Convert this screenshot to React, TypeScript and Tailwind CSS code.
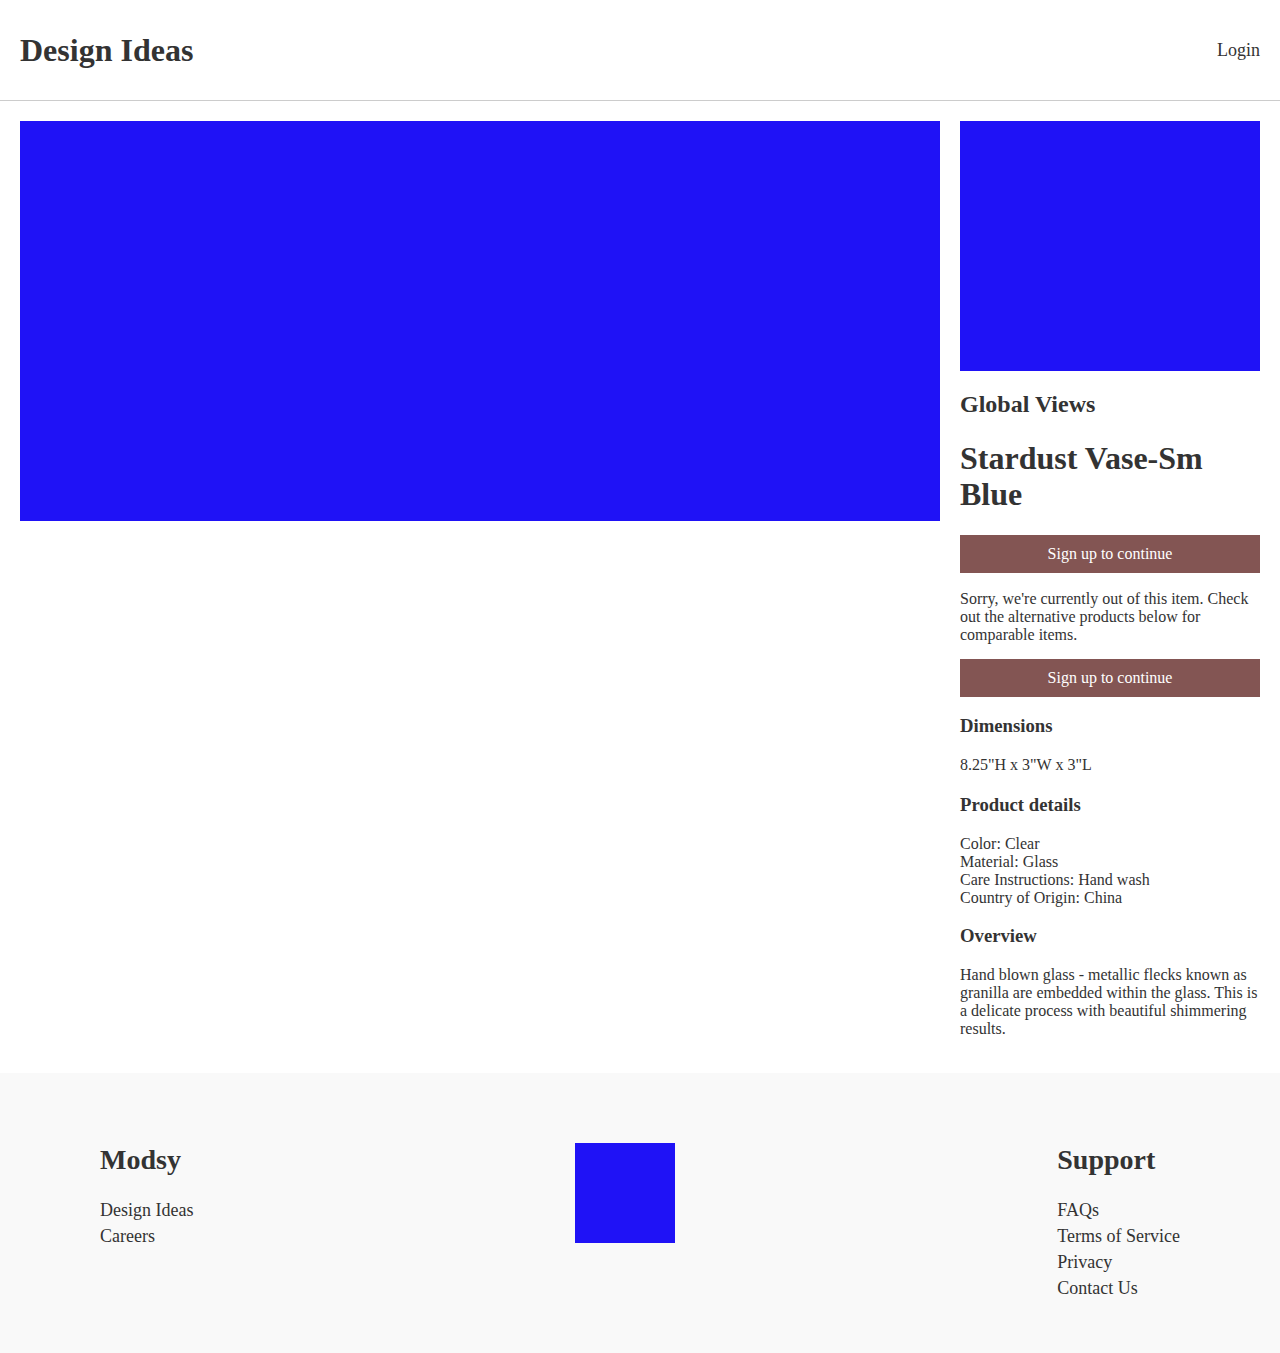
export default function App() {
  const serif = { fontFamily: '"Liberation Serif", "Times New Roman", serif' };
  return (
    <div style={serif} className="min-h-screen flex flex-col text-[#333] bg-white">
      <header className="h-[101px] border-b border-[#ccc] flex items-center justify-between px-5">
        <h1 className="text-[32px] font-bold leading-[1.15]">Design Ideas</h1>
        <a className="text-[18px]" href="#">Login</a>
      </header>

      <main className="flex gap-5 p-5 pb-1">
        <div className="flex-1 h-[400px] bg-[#1f12f6]" />
        <div className="w-[300px] shrink-0">
          <div className="h-[250px] bg-[#1f12f6]" />
          <h2 className="text-[24px] font-bold leading-[1.15] mt-[20px]">Global Views</h2>
          <h1 className="text-[32px] font-bold leading-[1.15] mt-[21px]">Stardust Vase-Sm Blue</h1>
          <button className="mt-[22px] w-full h-[38px] bg-[#835553] text-white text-[16px]">
            Sign up to continue
          </button>
          <p className="text-[16px] leading-[18px] mt-[17px] mb-[15px]">
            Sorry, we're currently out of this item. Check out the alternative products below for comparable items.
          </p>
          <button className="w-full h-[38px] bg-[#835553] text-white text-[16px]">
            Sign up to continue
          </button>
          <h3 className="text-[18.72px] font-bold leading-[1.15] mt-[18px] mb-[19px]">Dimensions</h3>
          <p className="text-[16px] leading-[18px]">8.25"H x 3"W x 3"L</p>
          <h3 className="text-[18.72px] font-bold leading-[1.15] mt-[20px] mb-[20px]">Product details</h3>
          <p className="text-[16px] leading-[18px]">
            Color: Clear
            <br />
            Material: Glass
            <br />
            Care Instructions: Hand wash
            <br />
            Country of Origin: China
          </p>
          <h3 className="text-[18.72px] font-bold leading-[1.15] mt-[18px] mb-[19px]">Overview</h3>
          <p className="text-[16px] leading-[18px] mb-4">
            Hand blown glass - metallic flecks known as granilla are embedded within the glass. This is a delicate process with beautiful shimmering results.
          </p>
        </div>
      </main>

      <footer className="mt-auto bg-[#f9f9f9] flex justify-between items-start px-[100px] pt-[70px] pb-[52px]">
        <div>
          <h2 className="text-[28px] font-bold leading-[1.15] mt-px">Modsy</h2>
          <ul className="mt-[21px] text-[18px] leading-[26px]">
            <li>Design Ideas</li>
            <li>Careers</li>
          </ul>
        </div>
        <div className="w-[100px] h-[100px] bg-[#1f12f6]" />
        <div>
          <h2 className="text-[28px] font-bold leading-[1.15] mt-px">Support</h2>
          <ul className="mt-[21px] text-[18px] leading-[26px]">
            <li>FAQs</li>
            <li>Terms of Service</li>
            <li>Privacy</li>
            <li>Contact Us</li>
          </ul>
        </div>
      </footer>
    </div>
  );
}
